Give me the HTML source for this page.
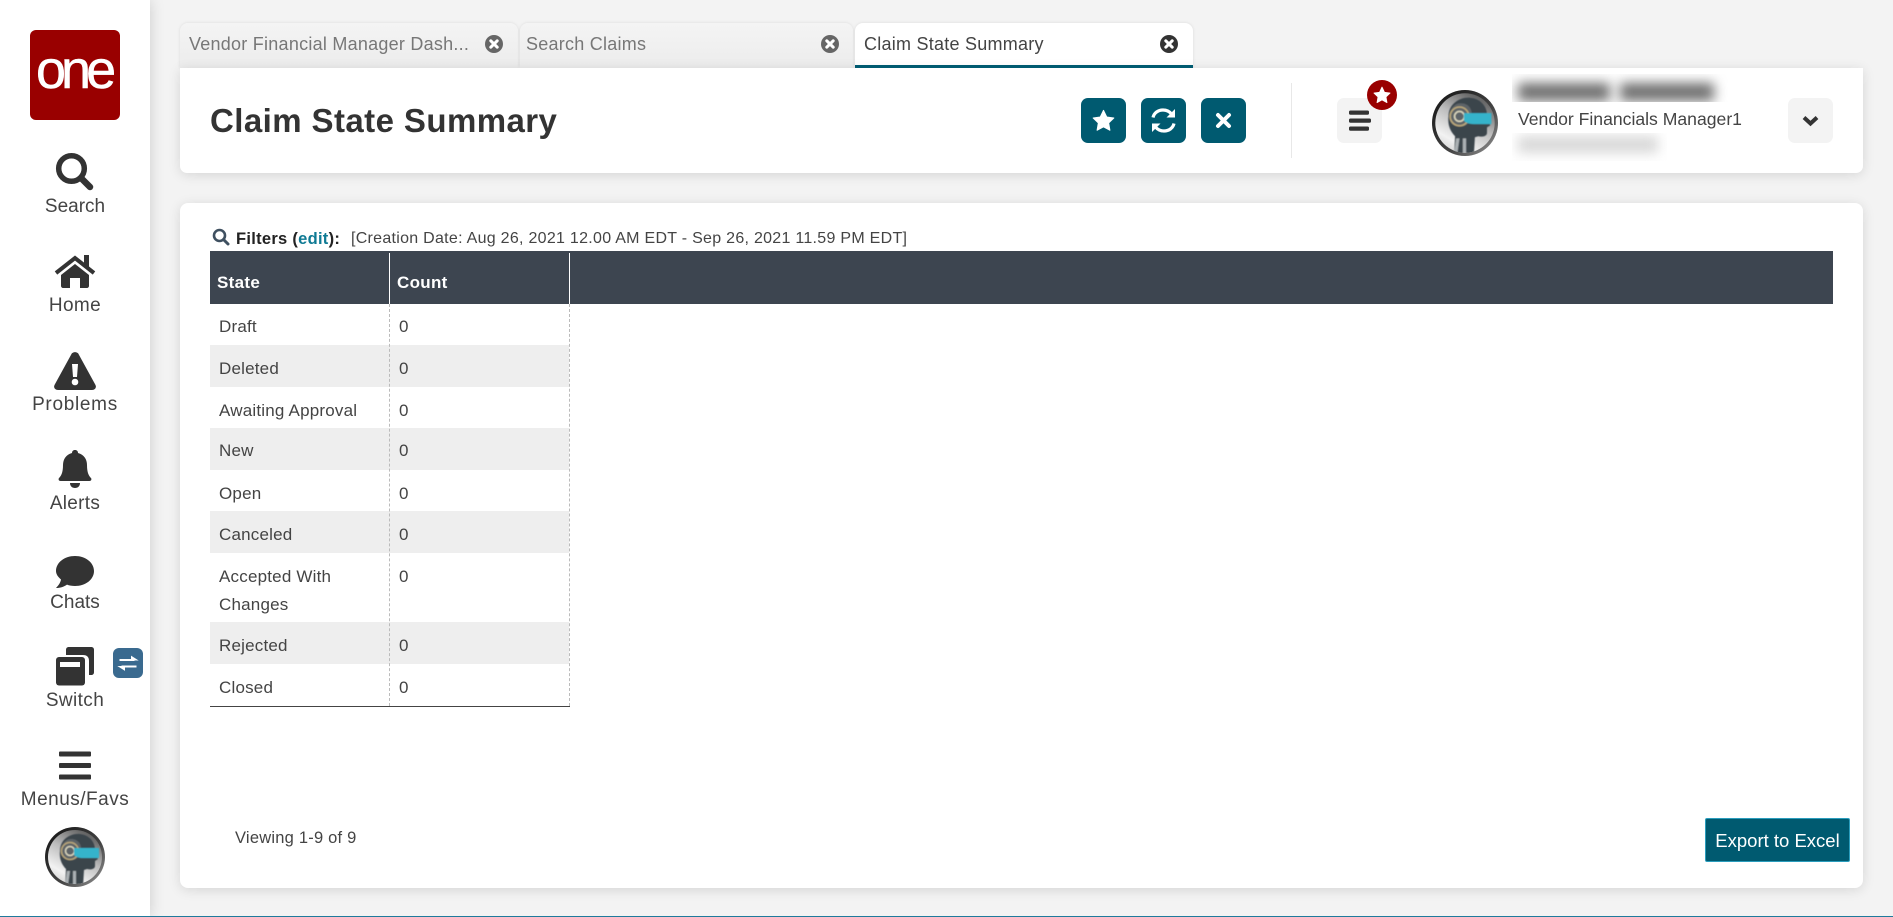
<!DOCTYPE html>
<html><head><meta charset="utf-8"><title>Claim State Summary</title>
<style>
html,body{margin:0;padding:0;width:1893px;height:917px;overflow:hidden;background:#f3f3f3;font-family:"Liberation Sans",sans-serif;color:#444}
.a{position:absolute}
.t{position:absolute;white-space:nowrap}
#side{left:0;top:0;width:150px;height:917px;background:#fff;box-shadow:0 0 14px rgba(0,0,0,.16)}
.lb{position:absolute;left:0;width:150px;text-align:center;font-size:19px;line-height:24px;color:#444}
.card{background:#fff;box-shadow:0 2px 12px rgba(0,0,0,.12)}
.tab{position:absolute;top:23px;height:45px;border-radius:8px 8px 0 0;background:linear-gradient(#f4f4f4,#ececec);box-shadow:0 0 3px rgba(0,0,0,.1)}
.tab .t{top:9px;font-size:18px;line-height:25px;color:#777;letter-spacing:.25px}
.btn{position:absolute;top:98px;width:45px;height:45px;border-radius:7px;background:#005a70}
.row{position:absolute;left:210px;width:359px}
.row .c1,.row .c2{position:absolute;font-size:17px;line-height:28px;color:#444;white-space:nowrap;letter-spacing:.2px}
.row .c1{left:9px;top:10px}
.row .c2{left:189px;top:10px}
.g{background:#eee}
</style></head><body>
<svg width="0" height="0" style="position:absolute"><defs>
<linearGradient id="rg" x1=".75" y1="0" x2=".2" y2="1"><stop offset="0" stop-color="#555"/><stop offset=".45" stop-color="#bdbdbd"/><stop offset=".8" stop-color="#f2f2f2"/><stop offset="1" stop-color="#cfcfcf"/></linearGradient>
<linearGradient id="rr" x1="0" y1="0" x2="1" y2="1"><stop offset="0" stop-color="#111"/><stop offset=".6" stop-color="#444"/><stop offset="1" stop-color="#9a9a9a"/></linearGradient>
<filter id="sf" x="-10%" y="-10%" width="120%" height="120%"><feGaussianBlur stdDeviation=".45"/></filter>
<clipPath id="cc"><circle cx="30" cy="30" r="27"/></clipPath>
<symbol id="av" viewBox="0 0 60 60">
<circle cx="30" cy="30" r="30" fill="url(#rr)"/>
<circle cx="30" cy="30" r="27" fill="url(#rg)"/>
<g clip-path="url(#cc)" filter="url(#sf)">
<path d="M15 24C15 12 26 6 35 7c10 1 16 9 15 18l3 7-3 2v5c0 3-4 4-8 3l-3 1-1 17H20l1-18c-4-4-7-10-6-18z" fill="#3a444b"/>
<path d="M16 27c-1-9 4-15 10-15 7 0 11 5 10 12-1 6-6 10-11 9-4 0-8-2-9-6z" fill="#5d6468"/>
<circle cx="25" cy="24" r="8.500" fill="none" stroke="#b9a679" stroke-width="1.500"/>
<circle cx="25" cy="24" r="4.500" fill="none" stroke="#d8d3bb" stroke-width="1.500"/>
<path d="M29 21h25v10H38c-4 0-7-1-9-3z" fill="#35b3cb"/>
<path d="M22 44h3l-2 14h-3zM28 44h3v14h-3z" fill="#aab0b3"/>
</g>
</symbol>
<symbol id="x" viewBox="0 0 20 20"><circle cx="10" cy="10" r="9"/><path d="M6.8 6.8l6.4 6.4M13.2 6.8l-6.4 6.4" stroke="#fff" stroke-width="3" stroke-linecap="round"/></symbol>
<symbol id="star" viewBox="0 0 24 24"><path d="M12 1.500l3.300 6.900 7.400 1-5.400 5.200 1.300 7.500L12 18.500l-6.600 3.600 1.300-7.500L1.300 9.400l7.400-1z" fill="#fff" stroke="#fff" stroke-width="1.200" stroke-linejoin="round"/></symbol>
</defs></svg>

<div id="side" class="a"></div>
<div class="a" style="left:30px;top:30px;width:90px;height:90px;background:#990000;border-radius:6px"></div>
<div class="t" style="left:36px;top:40px;font-size:54px;line-height:60px;color:#fff;letter-spacing:-5px;-webkit-text-stroke:.5px #fff">one</div>

<svg class="a" style="left:0;top:0" width="150" height="917" fill="#333">
<circle cx="71.500" cy="168.500" r="12.800" fill="none" stroke="#333" stroke-width="5.500"/><path d="M82 179l8 8" stroke="#333" stroke-width="6.500" stroke-linecap="round"/>
<path d="M56 273l19-15 19 15" fill="none" stroke="#333" stroke-width="4"/><path d="M84 255h5v13l-5-4z"/><path d="M61 275l14-11 14 11v11c0 1-1 2-2 2h-7v-10h-10v10h-7c-1 0-2-1-2-2z"/>
<path d="M71.500 354c1.500-2.500 5.500-2.500 7 0l17 31c1.200 2.500-.5 5-3.500 5H58c-3 0-4.700-2.500-3.500-5z"/><path d="M72 364h6l-1 13h-4z" fill="#fff"/><circle cx="75" cy="382" r="3.300" fill="#fff"/>
<path d="M75 450c2 0 3 1.300 3 3 6 1.500 9 6.500 9 12 0 8 2 11 4 13 1 1.500 0 3-1.500 3h-29c-1.500 0-2.500-1.500-1.500-3 2-2 4-5 4-13 0-5.500 3-10.500 9-12 0-1.700 1-3 3-3z"/><path d="M70 483h10c0 3-2 5-5 5s-5-2-5-5z"/>
<path d="M75 556c10.500 0 19 6.500 19 15s-8.500 15-19 15c-3 0-6-.5-8-1.400-3 2-6.500 3.400-11 3.400 2.500-2.500 4.500-5.500 5-8.500-3-2.500-5-5.500-5-8.500 0-8.500 8.500-15 19-15z"/>
<path d="M69 647h22c2 0 3 1 3 3v22c0 2-1 3-3 3h-2v-14c0-4-2-6-6-6H66v-5c0-2 1-3 3-3z"/><rect x="56" y="657" width="29" height="28.500" rx="3"/><rect x="60" y="662" width="20" height="5" fill="#fff"/>
<rect x="59" y="751.500" width="32" height="5" rx="1"/><rect x="59" y="763" width="32" height="5" rx="1"/><rect x="59" y="774.500" width="32" height="5" rx="1"/>
</svg>
<div class="lb" style="top:195px">Search</div>
<div class="lb" style="top:294px;letter-spacing:.4px">Home</div>
<div class="lb" style="top:393px;letter-spacing:.7px">Problems</div>
<div class="lb" style="top:492px;letter-spacing:.3px">Alerts</div>
<div class="lb" style="top:591px">Chats</div>
<div class="lb" style="top:689px;letter-spacing:.4px">Switch</div>
<div class="lb" style="top:788px;letter-spacing:.5px">Menus/Favs</div>
<div class="a" style="left:113px;top:648px;width:30px;height:30px;background:#3a6a8f;border-radius:6px"></div>
<svg class="a" style="left:113px;top:648px" width="30" height="30" fill="none" stroke="#fff" stroke-width="2"><path d="M6.500 12h15"/><path d="M18.500 8.500l5.500 3.500-5.500 0z" fill="#fff" stroke-width="1"/><path d="M23.500 18.500h-15"/><path d="M11.500 22l-5.500-3.500 5.500 0z" fill="#fff" stroke-width="1"/></svg>
<svg class="a" style="left:45px;top:827px" width="60" height="60"><use href="#av"/></svg>

<div class="tab" style="left:180px;width:338px"><div class="t" style="left:9px">Vendor Financial Manager Dash...</div></div>
<svg class="a" style="left:484px;top:34px;fill:#666" width="20" height="20"><use href="#x"/></svg>
<div class="tab" style="left:520px;width:333px"><div class="t" style="left:6px">Search Claims</div></div>
<svg class="a" style="left:820px;top:34px;fill:#666" width="20" height="20"><use href="#x"/></svg>
<div class="tab" style="left:855px;width:338px;background:#fff"><div class="t" style="left:9px;color:#444">Claim State Summary</div></div>
<svg class="a" style="left:1159px;top:34px;fill:#333" width="20" height="20"><use href="#x"/></svg>
<div class="a" style="left:855px;top:65px;width:338px;height:3px;background:#005a70;z-index:2"></div>

<div class="a card" style="left:180px;top:68px;width:1683px;height:105px;border-radius:0 0 7px 7px"></div>
<div class="t" style="left:210px;top:99px;font-size:33px;line-height:44px;font-weight:bold;color:#333;letter-spacing:.42px">Claim State Summary</div>
<div class="btn" style="left:1081px"><svg class="a" style="left:11px;top:11px" width="23" height="23"><use href="#star"/></svg></div>
<div class="btn" style="left:1141px"><svg class="a" style="left:0;top:0" width="45" height="45" fill="none" stroke="#fff" stroke-width="3.200"><path d="M12 19.500c1-4.500 5-7.500 10-7.500 3.500 0 6.500 1.500 8.500 4"/><path d="M33 25.500c-1 4.500-5 7.500-10 7.500-3.500 0-6.500-1.500-8.500-4"/><path d="M34 11v8.500h-8.500zM11 34v-8.500h8.500z" fill="#fff" stroke="none"/></svg></div>
<div class="btn" style="left:1201px"><svg class="a" style="left:0;top:0" width="45" height="45" fill="none" stroke="#fff" stroke-width="4" stroke-linecap="round"><path d="M17 17l11 11M28 17l-11 11"/></svg></div>
<div class="a" style="left:1291px;top:83px;width:1px;height:75px;background:#e8e8e8"></div>
<div class="btn" style="left:1337px;background:#f3f3f3"><svg class="a" style="left:0;top:0" width="45" height="45" fill="#333"><rect x="12" y="12.500" width="20" height="4.200" rx="1.500"/><rect x="12" y="20.500" width="22" height="4.200" rx="1.500"/><rect x="12" y="28.500" width="20" height="4.200" rx="1.500"/></svg></div>
<div class="a" style="left:1367px;top:80px;width:30px;height:30px;border-radius:50%;background:#990000"></div>
<svg class="a" style="left:1373px;top:86px" width="18" height="18"><use href="#star"/></svg>
<svg class="a" style="left:1432px;top:90px" width="66" height="66"><use href="#av"/></svg>
<div class="a" style="left:1512px;top:74px;width:216px;height:28px;overflow:hidden"><div class="a" style="left:6px;top:9px;width:92px;height:18px;background:#6e6e6e;filter:blur(6px)"></div><div class="a" style="left:108px;top:9px;width:94px;height:18px;background:#6e6e6e;filter:blur(6px)"></div></div>
<div class="t" style="left:1518px;top:106px;font-size:17.600px;line-height:26px;color:#444">Vendor Financials Manager1</div>
<div class="a" style="left:1512px;top:133px;width:155px;height:28px;overflow:hidden"><div class="a" style="left:6px;top:3px;width:140px;height:17px;background:#d8d8d8;filter:blur(6px)"></div></div>
<div class="btn" style="left:1788px;background:#f3f3f3"><svg class="a" style="left:0;top:0" width="45" height="45" fill="none" stroke="#333" stroke-width="4"><path d="M16 19.500l6.500 6 6.500-6"/></svg></div>

<div class="a card" style="left:180px;top:203px;width:1683px;height:685px;border-radius:8px"></div>
<svg class="a" style="left:212px;top:228px" width="18" height="18" fill="none" stroke="#3f5060" stroke-width="2.600"><circle cx="7.500" cy="7.500" r="5.500"/><path d="M11.500 11.500l4.500 4.500" stroke-width="3" stroke-linecap="round"/></svg>
<div class="t" style="left:236px;top:227px;font-size:16.500px;line-height:24px;font-weight:bold;color:#222;letter-spacing:.28px">Filters (<span style="color:#0f7a94">edit</span>):</div>
<div class="t" style="left:351px;top:227px;font-size:16px;line-height:24px;color:#444;letter-spacing:.28px">[Creation Date: Aug 26, 2021 12.00 AM EDT - Sep 26, 2021 11.59 PM EDT]</div>

<div class="a" style="left:210px;top:251px;width:1623px;height:53px;background:#3d4550"></div>
<div class="a" style="left:389px;top:253px;width:1px;height:51px;background:#fff"></div>
<div class="a" style="left:569px;top:253px;width:1px;height:51px;background:#fff"></div>
<div class="t" style="left:217px;top:270px;font-size:17px;line-height:26px;font-weight:bold;color:#fff;letter-spacing:.3px">State</div>
<div class="t" style="left:397px;top:270px;font-size:17px;line-height:26px;font-weight:bold;color:#fff;letter-spacing:.3px">Count</div>

<div class="row" style="top:304px;height:41px"><div class="c1" style="top:9px">Draft</div><div class="c2" style="top:9px">0</div></div>
<div class="row g" style="top:345px;height:42px"><div class="c1">Deleted</div><div class="c2">0</div></div>
<div class="row" style="top:387px;height:41px"><div class="c1">Awaiting Approval</div><div class="c2">0</div></div>
<div class="row g" style="top:428px;height:42px"><div class="c1" style="top:9px">New</div><div class="c2" style="top:9px">0</div></div>
<div class="row" style="top:470px;height:41px"><div class="c1">Open</div><div class="c2">0</div></div>
<div class="row g" style="top:511px;height:42px"><div class="c1">Canceled</div><div class="c2">0</div></div>
<div class="row" style="top:553px;height:69px"><div class="c1">Accepted With<br>Changes</div><div class="c2">0</div></div>
<div class="row g" style="top:622px;height:42px"><div class="c1">Rejected</div><div class="c2">0</div></div>
<div class="row" style="top:664px;height:42px"><div class="c1">Closed</div><div class="c2">0</div></div>
<div class="a" style="left:389px;top:304px;height:402px;border-left:1px dashed #bbb"></div>
<div class="a" style="left:569px;top:304px;height:402px;border-left:1px dashed #bbb"></div>
<div class="a" style="left:210px;top:706px;width:360px;height:1px;background:#444"></div>

<div class="t" style="left:235px;top:826px;font-size:16.500px;line-height:24px;color:#444;letter-spacing:.22px">Viewing 1-9 of 9</div>
<div class="a" style="left:1705px;top:818px;width:143px;height:42px;background:#005a70;border:1px solid #2a9dbd;border-radius:2px;text-align:center;font-size:18.500px;line-height:43px;color:#fff">Export to Excel</div>
<div class="a" style="left:0;top:916px;width:1893px;height:1px;background:#1f7a9c"></div>
</body></html>
